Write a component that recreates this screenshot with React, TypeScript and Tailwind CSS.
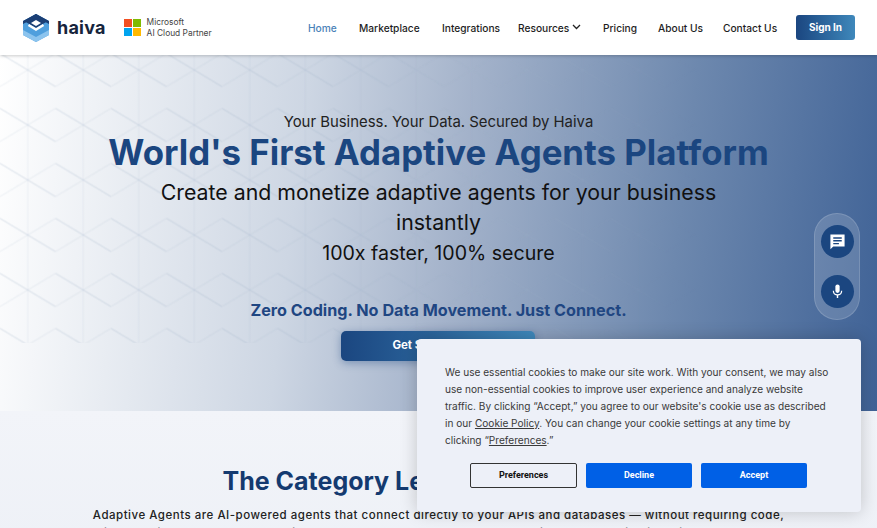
const pop = "font-['Inter','Liberation_Sans',sans-serif]";

function Pattern() {
  return (
    <svg className="absolute inset-x-0 top-0 w-full h-[288px] [mask-image:linear-gradient(to_right,black_45%,transparent_80%)]" xmlns="http://www.w3.org/2000/svg">
      <defs>
        <pattern id="hex" x="0" y="42.5" width="55.5" height="55" patternUnits="userSpaceOnUse">
          <path d="M0 11 L55.5 44" fill="none" stroke="#9fb0c8" strokeOpacity="0.22" strokeWidth="1.5" />
          <path d="M0 44 L55.5 11" fill="none" stroke="#9fb0c8" strokeOpacity="0.1" strokeWidth="1.5" />
          <path d="M27.75 0 V55" fill="none" stroke="#9fb0c8" strokeOpacity="0.12" strokeWidth="1" />
        </pattern>
      </defs>
      <rect width="100%" height="100%" fill="url(#hex)" />
    </svg>
  );
}

function Logo() {
  return (
    <svg width="28" height="28" viewBox="0 0 28 28">
      <path d="M14 0 L27 7 V21 L14 28 L1 21 V7 Z" fill="#4f9fdd" />
      <path d="M14 28 L1 21 V16 L14 23 L27 16 V21 Z" fill="#8cc4ee" />
      <path d="M14 0 L27 7 V10 L14 3 L1 10 V7 Z" fill="#1b3f75" />
      <path d="M14 0 L26 7 L14 14 L2 7 Z" fill="#1b3f75" />
      <path d="M6.5 11 L14 15.5 L21.5 11" fill="none" stroke="white" strokeWidth="2.6" />
      <path d="M14 6 L19 9 L14 12 L9 9 Z" fill="white" />
    </svg>
  );
}

function NavItem({ children, active, w }: { children: React.ReactNode; active?: boolean; w: string }) {
  return <span className={`${w} pt-[2px] text-[10.2px] leading-none font-medium whitespace-nowrap ${active ? "text-[#4a82b8]" : "text-[#1e1e1e]"}`}>{children}</span>;
}

export default function App() {
  return (
    <div className={`relative w-[877px] h-[528px] overflow-hidden bg-[#eff2f8] ${pop}`}>
      <header className="relative z-10 h-[55px] bg-white flex items-center pl-[22px] pr-[22px] shadow-[0_1px_3px_rgba(0,0,0,0.2)]">
        <Logo />
        <span className="ml-[7px] text-[18px] font-bold text-[#16243c] leading-none tracking-[0.2px]">haiva</span>
        <div className="ml-[18px] grid grid-cols-2 gap-[1px] w-[17px]">
          <span className="h-[8px] bg-[#f25022]" />
          <span className="h-[8px] bg-[#7fba00]" />
          <span className="h-[8px] bg-[#00a4ef]" />
          <span className="h-[8px] bg-[#ffb900]" />
        </div>
        <div className="ml-[6px] text-[8.4px] leading-[11px] text-[#444]">
          <div>Microsoft</div>
          <div>AI Cloud Partner</div>
        </div>
        <nav className="ml-auto flex items-center">
          <NavItem active w="w-[29px]">Home</NavItem>
          <div className="ml-[22px] flex"><NavItem w="w-[61px]">Marketplace</NavItem></div>
          <div className="ml-[22px] flex"><NavItem w="w-[58px]">Integrations</NavItem></div>
          <div className="ml-[18px] flex items-center">
            <NavItem w="w-[54px]">Resources</NavItem>
            <svg width="9" height="6" viewBox="0 0 9 6" fill="none" stroke="#222" strokeWidth="1.3"><path d="M1 1 L4.5 4.5 L8 1" /></svg>
          </div>
          <div className="ml-[22px] flex"><NavItem w="w-[33px]">Pricing</NavItem></div>
          <div className="ml-[22px] flex"><NavItem w="w-[43px]">About Us</NavItem></div>
          <div className="ml-[22px] flex"><NavItem w="w-[53px]">Contact Us</NavItem></div>
          <button className="ml-[20px] w-[59px] h-[25px] rounded-[3px] bg-gradient-to-r from-[#1b4680] to-[#3f88bb] text-white text-[10px] font-bold">Sign In</button>
        </nav>
      </header>

      <section className="relative h-[356px] bg-[linear-gradient(97deg,#ffffff_0%,#cdd6e3_34%,#a3b2ca_52%,#6d88ae_76%,#3f6296_100%)] flex flex-col items-center">
        <Pattern />
        <div className="relative flex flex-col items-center text-center">
          <p className="mt-[57px] text-[14.9px] leading-[20px] text-[#222]">Your Business. Your Data. Secured by Haiva</p>
          <h1 className="text-[34.8px] leading-[40px] font-bold text-[#1b4680] whitespace-nowrap">World's First Adaptive Agents Platform</h1>
          <p className="mt-[5px] w-[600px] text-[21.3px] leading-[30px] text-[#111]">
            Create and monetize adaptive agents for your business instantly
            <br /><span className="text-[19.6px]">100x faster, 100% secure</span>
          </p>
          <p className="mt-[30px] text-[16.2px] leading-[24px] font-bold text-[#1f4682]">Zero Coding. No Data Movement. Just Connect.</p>
          <button className="mt-[9px] w-[194px] h-[30px] rounded-[5px] bg-gradient-to-r from-[#1b4680] to-[#3f88bb] text-white text-[11.5px] font-bold shadow-[0_2px_8px_rgba(27,70,128,0.4)]">Get Started Now</button>
        </div>
      </section>

      <section className="bg-gradient-to-b from-[#f2f4f9] to-[#eef1f7] flex flex-col items-center">
        <h2 className="mt-[53px] w-[432px] text-left text-[25px] leading-[34px] font-bold text-[#143a70] whitespace-nowrap">The Category Leader in Adaptive Agents</h2>
        <p className="mt-[8px] w-[720px] text-center text-[11.5px] leading-[18px] font-medium tracking-[0.51px] text-[#222]">
          Adaptive Agents are AI-powered agents that connect directly to your APIs and databases — without requiring code, point-to-point connectors, or moving data. They adapt to your platform, logic and authentication with no extra setup.
        </p>
      </section>

      <div className="absolute left-[814px] top-[213px] w-[46px] h-[107px] rounded-full bg-white/15 border border-white/15 flex flex-col items-center pt-[11px] gap-[17px]">
        <div className="w-[33px] h-[33px] rounded-full bg-[#1b4680] flex items-center justify-center">
          <svg width="17" height="17" viewBox="0 0 24 24" fill="white"><path d="M2 2h20v17H6l-4 4zM6 6v2h12V6zm0 4v2h12v-2zm0 4v2h8v-2z" fillRule="evenodd" /></svg>
        </div>
        <div className="w-[33px] h-[33px] rounded-full bg-[#1b4680] flex items-center justify-center">
          <svg width="17" height="17" viewBox="0 0 24 24" fill="white"><path d="M12 14a3 3 0 0 0 3-3V5a3 3 0 0 0-6 0v6a3 3 0 0 0 3 3z" /><path d="M17 11a5 5 0 0 1-10 0H5.3a6.7 6.7 0 0 0 5.7 6.6V21h2v-3.4A6.7 6.7 0 0 0 18.7 11z" /></svg>
        </div>
      </div>

      <div className="absolute left-[417px] top-[339px] w-[444px] h-[173px] rounded-[4px] bg-[#edf0f8] shadow-[0_0_18px_rgba(0,0,0,0.2)] pl-[28px] pt-[25px]">
        <p className="w-[388px] text-[10.1px] leading-[17px] text-[#3a3a3a]">
          We use essential cookies to make our site work. With your consent, we may also use non-essential cookies to improve user experience and analyze website traffic. By clicking “Accept,” you agree to our website's cookie use as described in our <span className="underline">Cookie Policy</span>. You can change your cookie settings at any time by
          <br />clicking “<span className="underline">Preferences</span>.”
        </p>
        <div className="mt-[14px] ml-[25px] flex gap-[9px]">
          <button className="w-[107px] h-[25px] rounded-[2px] border border-[#333] text-[#111] text-[9px] font-bold font-['Roboto',sans-serif]">Preferences</button>
          <button className="w-[106px] h-[25px] rounded-[2px] bg-[#0060e6] text-white text-[9px] font-bold font-['Roboto',sans-serif]">Decline</button>
          <button className="w-[106px] h-[25px] rounded-[2px] bg-[#0060e6] text-white text-[9px] font-bold font-['Roboto',sans-serif]">Accept</button>
        </div>
      </div>
    </div>
  );
}
